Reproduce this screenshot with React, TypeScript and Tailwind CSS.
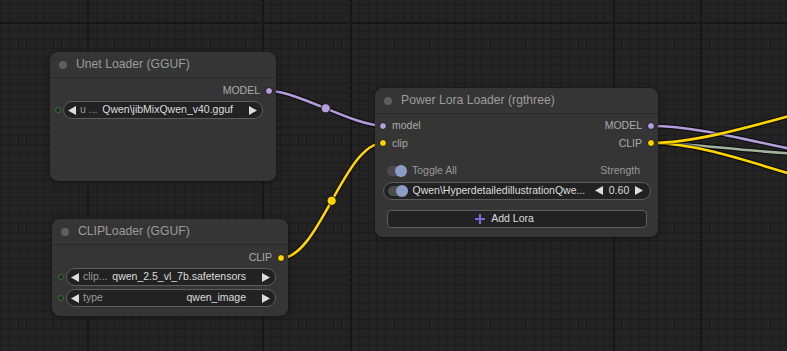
import React from 'react'

const VLINES = Array.from({ length: 91 }, (_, k) => Math.round(k * 8.75))
const HLINES = Array.from({ length: 41 }, (_, k) => Math.round(4 + k * 8.75))
const MAJOR_X = [87, 262, 350, 613, 700]

function Grid() {
  return (
    <svg className="absolute inset-0" width={787} height={351} shapeRendering="crispEdges">
      {VLINES.map((x) => (
        <rect key={'v' + x} x={x} y={0} width={1} height={351} fill="#1c1c1c" />
      ))}
      {HLINES.map((y) => (
        <rect key={'h' + y} x={0} y={y} width={787} height={1} fill="#1c1c1c" />
      ))}
      {MAJOR_X.map((x) => (
        <rect key={'m' + x} x={x} y={0} width={2} height={351} fill="#181818" />
      ))}
      <rect x={0} y={22} width={787} height={2} fill="#181818" />
    </svg>
  )
}

function Wire({ d, color }: { d: string; color: string }) {
  return (
    <g fill="none" strokeLinecap="round">
      <path d={d} stroke="rgba(0,0,0,0.55)" strokeWidth={5} />
      <path d={d} stroke={color} strokeWidth={2.6} />
    </g>
  )
}

function Wires() {
  return (
    <svg className="absolute inset-0" width={787} height={351}>
      <Wire d="M268.7 91 C298.5 91 352.9 125.7 382.7 125.7" color="#b39ddb" />
      <Wire d="M280.7 258.3 C319.1 258.3 344.3 143.3 382.7 143.3" color="#ffd500" />
      <Wire d="M651 126 C690 126 730 136 800 151" color="#b39ddb" />
      <Wire d="M651 143 C690 143 730 150 800 154" color="#a2b29c" />
      <Wire d="M651 143 C690 143 730 155 800 177" color="#ffd500" />
      <Wire d="M651 143 C690 143 740 130 800 113" color="#ffd500" />
      <circle cx={325.7} cy={108.3} r={4.6} fill="#b39ddb" stroke="#1a1a1a" strokeWidth={1} />
      <circle cx={331.7} cy={200.8} r={4.6} fill="#ffd500" stroke="#1a1a1a" strokeWidth={1} />
    </svg>
  )
}

function ArrowLeft() {
  return (
    <svg width={8} height={9} viewBox="0 0 8 9" className="shrink-0">
      <polygon points="8,0 8,9 0,4.5" fill="#dddddd" />
    </svg>
  )
}

function ArrowRight() {
  return (
    <svg width={8} height={9} viewBox="0 0 8 9" className="shrink-0">
      <polygon points="0,0 0,9 8,4.5" fill="#dddddd" />
    </svg>
  )
}

function NodeTitle({ children }: { children: React.ReactNode }) {
  return (
    <div className="flex h-[26px] shrink-0 items-center border-b border-[#2b2b2b] pl-[9px]">
      <span className="h-[8px] w-[8px] rounded-full bg-[#5e5e5e]" />
      <span className="ml-[9px] text-[12.2px] text-[#9c9c9c]">{children}</span>
    </div>
  )
}

function SlotDot({ color }: { color: string }) {
  return <span className={`h-[8px] w-[8px] shrink-0 rounded-full border border-[#161616] ${color}`} />
}

function Combo({ label, value }: { label: string; value: string }) {
  return (
    <div className="flex h-[18px] flex-1 items-center rounded-full border border-[#5c5c5c] bg-[#222] pl-[4px] pr-[5px] text-[10.5px]">
      <ArrowLeft />
      <span className="ml-[4px] text-[#999]">{label}</span>
      <span className="flex-1" />
      <span className="mr-[16px] text-[#dddddd]">{value}</span>
      <ArrowRight />
    </div>
  )
}

function WidgetInput() {
  return <span className="h-[6px] w-[6px] shrink-0 rounded-full border border-[#3c6e3c] bg-[#1d2a1d]" />
}

function Toggle() {
  return (
    <span className="relative h-[10px] w-[20px] shrink-0 rounded-full bg-[#4b4b4b]">
      <span className="absolute right-0 top-1/2 h-[12px] w-[12px] -translate-y-1/2 rounded-full bg-[#8a9cc6]" />
    </span>
  )
}

function UnetLoader() {
  return (
    <div className="absolute left-[50px] top-[52px] flex h-[129px] w-[226px] flex-col rounded-[8px] bg-[#353535] shadow-[0_1px_5px_rgba(0,0,0,0.45)]">
      <NodeTitle>Unet Loader (GGUF)</NodeTitle>
      <div className="flex flex-col pt-[4px]">
        <div className="flex h-[18px] items-center justify-end gap-[5px] pr-[3px]">
          <span className="text-[10.5px] text-[#aaa]">MODEL</span>
          <SlotDot color="bg-[#b39ddb]" />
        </div>
        <div className="mt-[1px] flex items-center gap-[2px] pl-[5px] pr-[13px]">
          <WidgetInput />
          <Combo label="u ..." value="Qwen\jibMixQwen_v40.gguf" />
        </div>
      </div>
    </div>
  )
}

function ClipLoader() {
  return (
    <div className="absolute left-[52px] top-[219px] flex h-[97px] w-[236px] flex-col rounded-[8px] bg-[#353535] shadow-[0_1px_5px_rgba(0,0,0,0.45)]">
      <NodeTitle>CLIPLoader (GGUF)</NodeTitle>
      <div className="flex flex-col pt-[4px]">
        <div className="flex h-[18px] items-center justify-end gap-[5px] pr-[3px]">
          <span className="text-[10.5px] text-[#aaa]">CLIP</span>
          <SlotDot color="bg-[#ffd500]" />
        </div>
        <div className="mt-[1px] flex items-center gap-[2px] pl-[6px] pr-[12px]">
          <WidgetInput />
          <Combo label="clip..." value="qwen_2.5_vl_7b.safetensors" />
        </div>
        <div className="mt-[3px] flex items-center gap-[2px] pl-[6px] pr-[12px]">
          <WidgetInput />
          <Combo label="type" value="qwen_image" />
        </div>
      </div>
    </div>
  )
}

function PowerLoraLoader() {
  return (
    <div className="absolute left-[375px] top-[88px] flex h-[149px] w-[283px] flex-col rounded-[8px] bg-[#353535] shadow-[0_1px_5px_rgba(0,0,0,0.45)]">
      <NodeTitle>Power Lora Loader (rgthree)</NodeTitle>
      <div className="flex flex-col pt-[3px] text-[10.5px]">
        <div className="flex h-[17.6px] items-center justify-between pl-[4px] pr-[3px]">
          <div className="flex items-center gap-[5px]">
            <SlotDot color="bg-[#b39ddb]" />
            <span className="text-[#aaa]">model</span>
          </div>
          <div className="flex items-center gap-[5px]">
            <span className="text-[#aaa]">MODEL</span>
            <SlotDot color="bg-[#b39ddb]" />
          </div>
        </div>
        <div className="flex h-[17.6px] items-center justify-between pl-[4px] pr-[3px]">
          <div className="flex items-center gap-[5px]">
            <SlotDot color="bg-[#ffd500]" />
            <span className="text-[#aaa]">clip</span>
          </div>
          <div className="flex items-center gap-[5px]">
            <span className="text-[#aaa]">CLIP</span>
            <SlotDot color="bg-[#ffd500]" />
          </div>
        </div>

        <div className="mt-[10px] flex h-[18px] items-center pl-[12px] pr-[18px]">
          <Toggle />
          <span className="ml-[5px] text-[#999]">Toggle All</span>
          <span className="flex-1" />
          <span className="text-[#999]">Strength</span>
        </div>

        <div className="ml-[8px] mr-[7px] mt-[2px] flex h-[17.6px] items-center rounded-full border border-[#5c5c5c] bg-[#222] pl-[3.5px] pr-[7px]">
          <Toggle />
          <span className="ml-[5px] flex-1 text-[#dddddd]">Qwen\HyperdetailedillustrationQwe...</span>
          <ArrowLeft />
          <span className="mx-[3px] w-[26px] text-center text-[#dddddd]">0.60</span>
          <ArrowRight />
        </div>

        <div className="ml-[12px] mr-[11px] mt-[10.5px] flex h-[17.5px] items-center justify-center gap-[6px] rounded-[4px] border border-[#5c5c5c] bg-[#222] pr-[25px]">
          <svg width={10} height={10} viewBox="0 0 10 10">
            <rect x={4} y={0} width={2} height={10} fill="#7b6ad6" />
            <rect x={0} y={4} width={10} height={2} fill="#7b6ad6" />
          </svg>
          <span className="text-[#dddddd]">Add Lora</span>
        </div>
      </div>
    </div>
  )
}

export default function App() {
  return (
    <div className="relative h-[351px] w-[787px] overflow-hidden bg-[#232323] font-['Liberation_Sans',Arial,sans-serif]">
      <Grid />
      <Wires />
      <UnetLoader />
      <ClipLoader />
      <PowerLoraLoader />
    </div>
  )
}
